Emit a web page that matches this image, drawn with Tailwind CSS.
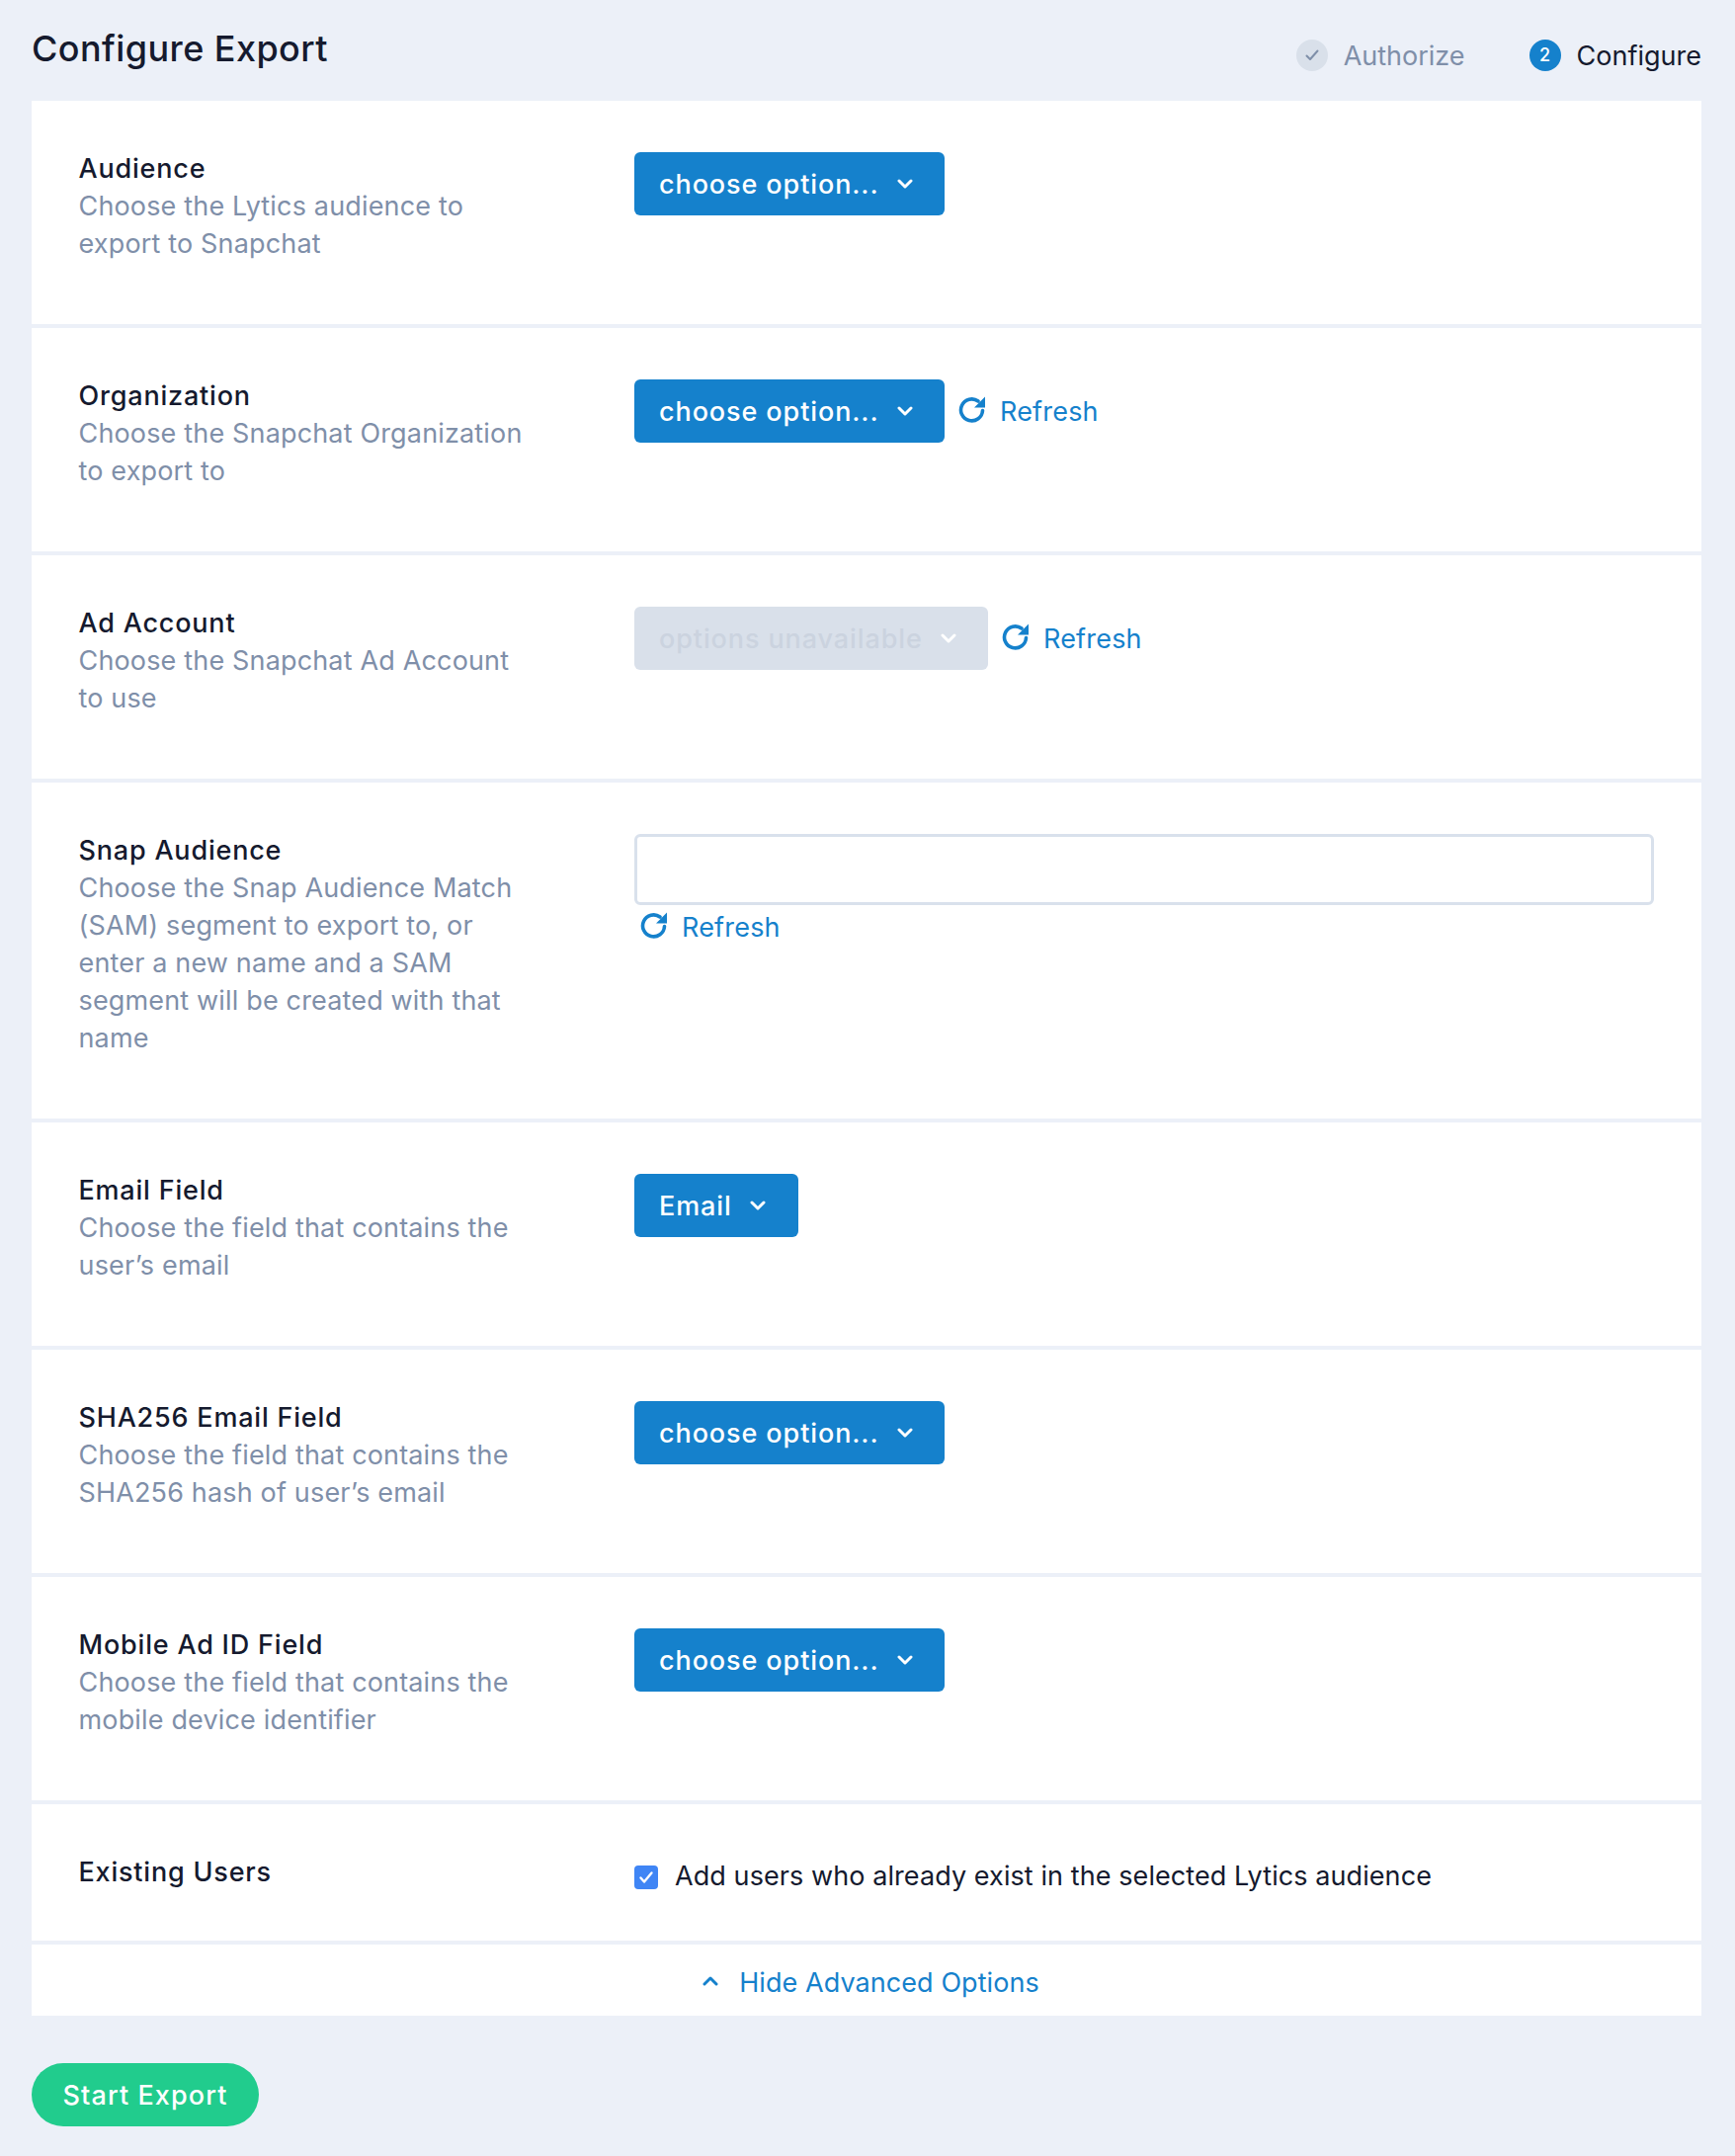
<!DOCTYPE html>
<html lang="en">
<head>
<meta charset="utf-8">
<title>Configure Export</title>
<script src="https://cdn.jsdelivr.net/npm/@tailwindcss/browser@4"></script>
</head>
<body class="m-0 bg-[#ecf0f8] font-['Inter',sans-serif] text-[27px] leading-[38px] text-[#151a2e]">
<div class="w-[1756px] h-[2182px] pl-[32px] pr-[34px]">
  <header class="flex justify-between h-[102px]">
    <h1 class="mt-[27px] text-[36px] leading-[44px] font-medium tracking-[0.42px]">Configure Export</h1>
    <div class="flex mt-[36px] h-[40px] items-center">
      <span class="w-[32px] h-[32px] rounded-full bg-[#d9e0ea] flex items-center justify-center">
        <svg width="16" height="14" viewBox="0 0 16 14" fill="none" stroke="#7f8fa9" stroke-width="2" stroke-linecap="round" stroke-linejoin="round"><path d="M2.5 7.5 6 11l7.5-8.5"/></svg>
      </span>
      <span class="ml-[16px] pt-[2px] text-[#7f8fa9]">Authorize</span>
      <span class="ml-[65px] w-[32px] h-[32px] rounded-full bg-[#1581cc] flex items-center justify-center text-white text-[18px] font-medium">2</span>
      <span class="ml-[16px] pt-[2px]">Configure</span>
    </div>
  </header>

  <main class="flex flex-col gap-[4px]">
    <section class="bg-white flex h-[226px] pl-[47.5px] pr-[48px]">
      <div class="w-[562.5px] shrink-0 pt-[50px] pr-[107px]"><div class="font-medium tracking-[0.8px]">Audience</div><p class="text-[#7f8fa9] tracking-[0.16px]">Choose the Lytics audience to export to Snapchat</p></div>
      <div class="pt-[52px] flex-1 flex items-start">
        <button class="h-[64px] w-[314px] rounded-[6px] bg-[#1581cc] text-white font-medium tracking-[0.9px] flex items-center pl-[25px]"><span class="pt-[1px]">choose option...</span><svg class="ml-[18px]" width="16" height="10" viewBox="0 0 16 10" fill="none" stroke="currentColor" stroke-width="3" stroke-linecap="round" stroke-linejoin="round"><path d="M2 2l6 6 6-6"/></svg></button>
      </div>
    </section>

    <section class="bg-white flex h-[226px] pl-[47.5px] pr-[48px]">
      <div class="w-[562.5px] shrink-0 pt-[50px] pr-[107px]"><div class="font-medium tracking-[0.8px]">Organization</div><p class="text-[#7f8fa9] tracking-[0.16px]">Choose the Snapchat Organization to export to</p></div>
      <div class="pt-[52px] flex-1 flex items-start">
        <button class="h-[64px] w-[314px] rounded-[6px] bg-[#1581cc] text-white font-medium tracking-[0.9px] flex items-center pl-[25px]"><span class="pt-[1px]">choose option...</span><svg class="ml-[18px]" width="16" height="10" viewBox="0 0 16 10" fill="none" stroke="currentColor" stroke-width="3" stroke-linecap="round" stroke-linejoin="round"><path d="M2 2l6 6 6-6"/></svg></button>
        <a class="ml-[14px] h-[64px] flex items-center text-[#1581cc]"><svg class="mb-[3px]" width="28" height="28" viewBox="0 0 28 28" fill="none"><path d="M24.5 14.5A11 11 0 1 1 20 5" stroke="currentColor" stroke-width="3.6" stroke-linecap="round"/><path d="M27 0.5V11.5H16z" fill="currentColor"/></svg><span class="ml-[14px] pt-[1px] tracking-[0.2px]">Refresh</span></a>
      </div>
    </section>

    <section class="bg-white flex h-[226px] pl-[47.5px] pr-[48px]">
      <div class="w-[562.5px] shrink-0 pt-[50px] pr-[107px]"><div class="font-medium tracking-[0.8px]">Ad Account</div><p class="text-[#7f8fa9] tracking-[0.16px]">Choose the Snapchat Ad Account to use</p></div>
      <div class="pt-[52px] flex-1 flex items-start">
        <button class="h-[64px] w-[358px] rounded-[6px] bg-[#d9e0ea] text-[#cbd3df] font-medium tracking-[0.9px] flex items-center pl-[25px]"><span class="pt-[1px]">options unavailable</span><svg class="ml-[18px] text-white" width="16" height="10" viewBox="0 0 16 10" fill="none" stroke="currentColor" stroke-width="3" stroke-linecap="round" stroke-linejoin="round"><path d="M2 2l6 6 6-6"/></svg></button>
        <a class="ml-[14px] h-[64px] flex items-center text-[#1581cc]"><svg class="mb-[3px]" width="28" height="28" viewBox="0 0 28 28" fill="none"><path d="M24.5 14.5A11 11 0 1 1 20 5" stroke="currentColor" stroke-width="3.6" stroke-linecap="round"/><path d="M27 0.5V11.5H16z" fill="currentColor"/></svg><span class="ml-[14px] pt-[1px] tracking-[0.2px]">Refresh</span></a>
      </div>
    </section>

    <section class="bg-white flex h-[340px] pl-[47.5px] pr-[48px]">
      <div class="w-[562.5px] shrink-0 pt-[50px] pr-[107px]"><div class="font-medium tracking-[0.8px]">Snap Audience</div><p class="text-[#7f8fa9] tracking-[0.16px]">Choose the Snap Audience Match (SAM) segment to export to, or enter a new name and a SAM segment will be created with that name</p></div>
      <div class="pt-[52px] flex-1">
        <input type="text" class="block w-full h-[72px] rounded-[6px] border-[3px] border-[#d9e1ec] bg-white">
        <a class="ml-[6px] flex items-center text-[#1581cc] h-[44px]"><svg class="mb-[3px]" width="28" height="28" viewBox="0 0 28 28" fill="none"><path d="M24.5 14.5A11 11 0 1 1 20 5" stroke="currentColor" stroke-width="3.6" stroke-linecap="round"/><path d="M27 0.5V11.5H16z" fill="currentColor"/></svg><span class="ml-[14px] pt-[1px] tracking-[0.2px]">Refresh</span></a>
      </div>
    </section>

    <section class="bg-white flex h-[226px] pl-[47.5px] pr-[48px]">
      <div class="w-[562.5px] shrink-0 pt-[50px] pr-[107px]"><div class="font-medium tracking-[0.8px]">Email Field</div><p class="text-[#7f8fa9] tracking-[0.16px]">Choose the field that contains the user’s email</p></div>
      <div class="pt-[52px] flex-1 flex items-start">
        <button class="h-[64px] w-[166px] rounded-[6px] bg-[#1581cc] text-white font-medium tracking-[0.9px] flex items-center pl-[25px]"><span class="pt-[1px]">Email</span><svg class="ml-[18px]" width="16" height="10" viewBox="0 0 16 10" fill="none" stroke="currentColor" stroke-width="3" stroke-linecap="round" stroke-linejoin="round"><path d="M2 2l6 6 6-6"/></svg></button>
      </div>
    </section>

    <section class="bg-white flex h-[226px] pl-[47.5px] pr-[48px]">
      <div class="w-[562.5px] shrink-0 pt-[50px] pr-[107px]"><div class="font-medium tracking-[0.8px]">SHA256 Email Field</div><p class="text-[#7f8fa9] tracking-[0.16px]">Choose the field that contains the SHA256 hash of user’s email</p></div>
      <div class="pt-[52px] flex-1 flex items-start">
        <button class="h-[64px] w-[314px] rounded-[6px] bg-[#1581cc] text-white font-medium tracking-[0.9px] flex items-center pl-[25px]"><span class="pt-[1px]">choose option...</span><svg class="ml-[18px]" width="16" height="10" viewBox="0 0 16 10" fill="none" stroke="currentColor" stroke-width="3" stroke-linecap="round" stroke-linejoin="round"><path d="M2 2l6 6 6-6"/></svg></button>
      </div>
    </section>

    <section class="bg-white flex h-[226px] pl-[47.5px] pr-[48px]">
      <div class="w-[562.5px] shrink-0 pt-[50px] pr-[107px]"><div class="font-medium tracking-[0.8px]">Mobile Ad ID Field</div><p class="text-[#7f8fa9] tracking-[0.16px]">Choose the field that contains the mobile device identifier</p></div>
      <div class="pt-[52px] flex-1 flex items-start">
        <button class="h-[64px] w-[314px] rounded-[6px] bg-[#1581cc] text-white font-medium tracking-[0.9px] flex items-center pl-[25px]"><span class="pt-[1px]">choose option...</span><svg class="ml-[18px]" width="16" height="10" viewBox="0 0 16 10" fill="none" stroke="currentColor" stroke-width="3" stroke-linecap="round" stroke-linejoin="round"><path d="M2 2l6 6 6-6"/></svg></button>
      </div>
    </section>

    <section class="bg-white flex h-[138px] pl-[47.5px] pr-[48px]">
      <div class="w-[562.5px] shrink-0 pt-[50px]"><div class="font-medium tracking-[0.8px]">Existing Users</div></div>
      <label class="pt-[52px] flex-1 flex items-start">
        <span class="mt-[10px] w-[24px] h-[24px] rounded-[4px] bg-[#3f85f5] flex items-center justify-center"><svg width="16" height="14" viewBox="0 0 16 14" fill="none" stroke="white" stroke-width="2.4" stroke-linecap="round" stroke-linejoin="round"><path d="M2.5 7.5 6 11.5 13.5 2.5"/></svg></span>
        <span class="ml-[17px] pt-[1.5px] tracking-[0.08px]">Add users who already exist in the selected Lytics audience</span>
      </label>
    </section>

    <section class="bg-white h-[72px] pl-[9px] pt-[5px] flex items-center justify-center text-[#1581cc]">
      <svg class="mr-[21px] mb-[4px]" width="16" height="10" viewBox="0 0 16 10" fill="none" stroke="currentColor" stroke-width="3" stroke-linecap="round" stroke-linejoin="round"><path d="M2 8l6-6 6 6"/></svg>
      <span class="tracking-[0.07px]">Hide Advanced Options</span>
    </section>
  </main>

  <button class="mt-[48px] h-[64px] w-[230px] pt-[1px] rounded-full bg-[#21cc8d] text-white font-medium tracking-[1.1px]">Start Export</button>
</div>
</body>
</html>
